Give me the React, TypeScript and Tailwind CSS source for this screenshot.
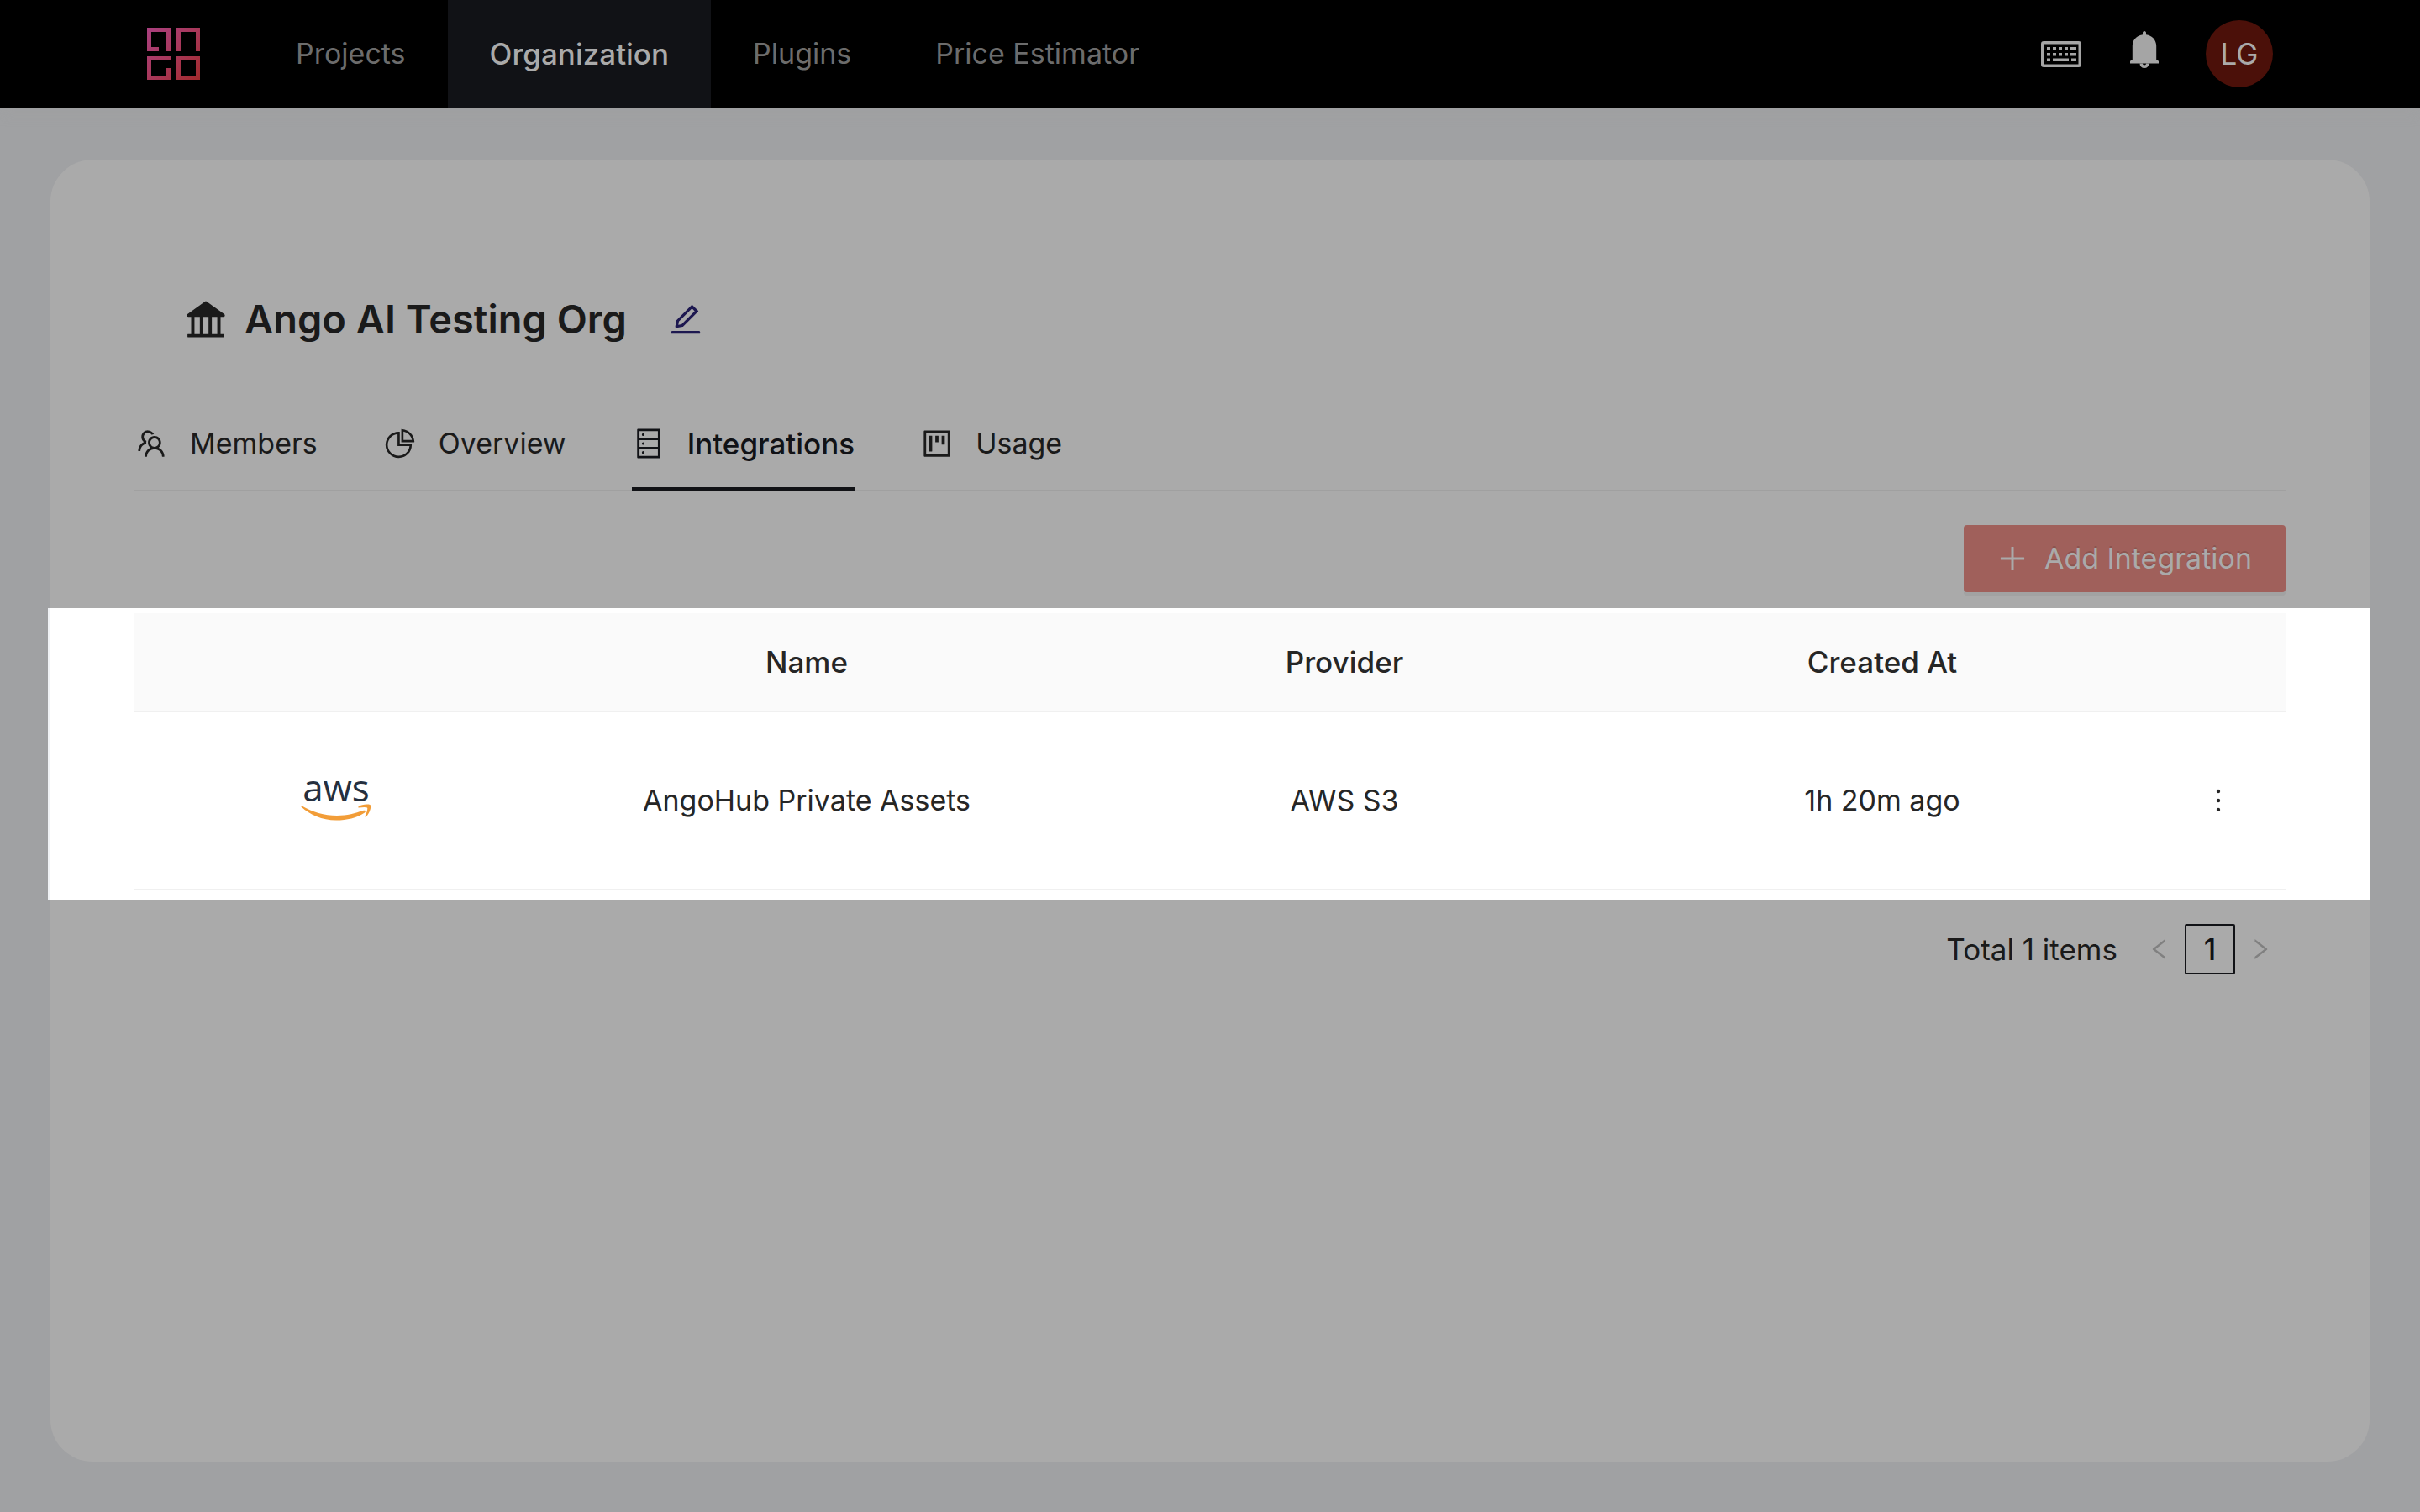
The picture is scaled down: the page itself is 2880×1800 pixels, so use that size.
import {
  AiFillBank, AiOutlineDatabase, AiOutlineEdit, AiOutlineLeft, AiOutlineMore,
  AiOutlinePieChart, AiOutlinePlus, AiOutlineProject, AiOutlineRight, AiOutlineTeam,
} from "react-icons/ai";

const NAV = ["Projects", "Organization", "Plugins", "Price Estimator"];

const TABS = [
  { label: "Members", Icon: AiOutlineTeam },
  { label: "Overview", Icon: AiOutlinePieChart },
  { label: "Integrations", Icon: AiOutlineDatabase },
  { label: "Usage", Icon: AiOutlineProject },
];

function Logo() {
  return (
    <svg viewBox="0 0 63 62" className="h-[62px] w-[63px]" fill="none" role="img" aria-label="Ango">
      <defs>
        <linearGradient id="logo" x1="0" y1="0" x2="63" y2="62" gradientUnits="userSpaceOnUse">
          <stop offset="0" stopColor="#aa4080" />
          <stop offset="0.5" stopColor="#a8385a" />
          <stop offset="1" stopColor="#a22a2c" />
        </linearGradient>
      </defs>
      <g stroke="url(#logo)" strokeWidth="5">
        <path d="M14 25.500H2.500V2.500H25.500V28" />
        <path d="M37.500 28V2.500H60.500V28" />
        <path d="M28 36.500H2.500V59.500H25.500V48" />
        <path d="M37.500 36.500H60.500V59.500H37.500Z" />
      </g>
    </svg>
  );
}

function KeyboardIcon() {
  return (
    <svg viewBox="0 0 48 31" className="h-[31px] w-[48px]" fill="currentColor" aria-hidden="true">
      <rect x="1.750" y="1.750" width="44.500" height="27.500" rx="1.500" fill="none" stroke="currentColor" strokeWidth="3.500" />
      <path d="M7 7h4v3.500H7zM14 7h4v3.500h-4zM21 7h4v3.500h-4zM28 7h4v3.500h-4zM34.500 7H42v3.500h-7.500z" />
      <path d="M7 14h4v3.500H7zM14 14h4v3.500h-4zM21 14h4v3.500h-4zM28 14h4v3.500h-4zM34.500 14H42v3.500h-7.500z" />
      <path d="M7 20.500h4V24H7zM14 20.500h19V24H14zM36 20.500h6V24h-6z" />
    </svg>
  );
}

function BellIcon() {
  return (
    <svg viewBox="0 0 34 54" className="h-[54px] w-[34px]" fill="currentColor" aria-hidden="true">
      <path d="M17 0C18.300 0 19 1 19 2.200V4.200C26 5 31.200 10.500 31.200 17.500V35H32.500C33.500 35 34 35.600 34 36.500V38.600H0V36.500C0 35.600 0.500 35 1.500 35H2.800V17.500C2.800 10.500 8 5 15 4.200V2.200C15 1 15.700 0 17 0Z" />
      <path d="M13.200 38.500A3.800 3.800 0 0 0 20.800 38.500" fill="none" stroke="currentColor" strokeWidth="3.400" />
    </svg>
  );
}

function AwsLogo() {
  return (
    <div className="flex flex-col items-center pb-[12px]" role="img" aria-label="aws">
      <span className="font-['Open_Sans',sans-serif] text-[44px] leading-[40px] font-medium text-[#252f3e]">aws</span>
      <svg viewBox="0 0 84 20" className="h-[20px] w-[84px]" fill="#f29d38">
        <path d="M0.500 2C14 10 28 14 43 14C55 14 65 11 74 8C77 7 78 9 76 10.500C66 17 55 19.500 42 19.500C25 19.500 11 13 0.500 3.500C-0.300 2.500 0 1.600 0.500 2Z" />
        <path d="M68.500 3.500C72 0.500 79 0 82.500 1C84.500 3 82 11 78 15C77 16 76 15.500 76.500 14.500C78 11 80 6 79 4.500C77 3.500 73 4 69 4.500C68 4.500 67.800 4 68.500 3.500Z" />
      </svg>
    </div>
  );
}

export default function App() {
  return (
    <div className="flex min-h-screen flex-col bg-[#a0a1a3] font-[Inter,sans-serif] text-[34px] leading-[56px] text-[#1a1a1a]">
      <header className="flex h-[128px] items-center bg-black px-[175px] shadow-[0_4px_16px_rgba(160,160,160,0.4)]">
        <Logo />
        <nav className="ml-[64px] flex h-full">
          {NAV.map((label) => (
            <a
              key={label}
              href="#"
              aria-current={label === "Organization" ? "page" : undefined}
              className={
                label === "Organization"
                  ? "flex items-center bg-[#111216] px-[50px] text-[35px] font-medium text-[#aaaaaa]"
                  : "flex items-center px-[50px] text-[#6c6c6c]"
              }
            >
              {label}
            </a>
          ))}
        </nav>
        <div className="ml-auto flex items-center text-[#a5a5a5]">
          <button aria-label="Keyboard shortcuts"><KeyboardIcon /></button>
          <button aria-label="Notifications" className="ml-[58px]"><BellIcon /></button>
          <button className="ml-[56px] size-[80px] rounded-full bg-[#4b1009] text-[35px] text-[#aaaaaa]">LG</button>
        </div>
      </header>

      <main className="mx-[60px] mt-[62px] mb-[60px] flex-1 rounded-[50px] bg-[#aaaaaa] px-[100px] pt-[154px]">
        <div className="flex items-center pl-[57px]">
          <AiFillBank className="size-[56px]" />
          <h1 className="ml-[18px] text-[47px] leading-[72px] font-semibold">Ango AI Testing Org</h1>
          <button aria-label="Edit organization name" className="ml-[48px] text-[#1d1850]"><AiOutlineEdit className="size-[44px]" /></button>
        </div>

        <div role="tablist" className="mt-[50px] flex h-[119px] gap-[78px] border-b-2 border-[#a0a0a0]">
          {TABS.map(({ label, Icon }) => (
            <button
              key={label}
              role="tab"
              aria-selected={label === "Integrations"}
              className={
                label === "Integrations"
                  ? "-mb-[2px] flex items-center gap-[26px] border-b-5 border-[#111216] pt-[10px] text-[35px] font-medium text-[#111216]"
                  : "-mb-[2px] flex items-center gap-[26px] border-b-5 border-transparent pt-[10px]"
              }
            >
              <Icon className="size-[40px]" />
              {label}
            </button>
          ))}
        </div>

        <div className="mt-[40px] flex justify-end">
          <button className="flex h-[80px] items-center gap-[18px] rounded-[4px] bg-[#a0605b] pr-[40px] pl-[38px] text-[#aaaaaa] shadow-[0_4px_0_#a2a2a2] [text-shadow:0_-2px_0_rgba(0,0,0,0.12)]">
            <AiOutlinePlus className="size-[40px]" />
            Add Integration
          </button>
        </div>

        <section className="-mr-[100px] -ml-[103px] mt-[19px] border-l-3 border-[#f0f2f5] bg-white px-[100px] pt-[6px] pb-[11px]">
          <table className="w-full table-fixed border-collapse text-center text-[#262626]">
            <thead>
              <tr className="h-[117px] border-b-2 border-[#f0f0f0] bg-[#fafafa] text-[35px]">
                <th className="w-3/16" aria-label="Logo" />
                <th className="w-1/4 font-medium">Name</th>
                <th className="w-1/4 font-medium">Provider</th>
                <th className="w-1/4 font-medium">Created At</th>
                <th className="w-1/16" aria-label="Actions" />
              </tr>
            </thead>
            <tbody>
              <tr className="h-[212px] border-b-2 border-[#f0f0f0]">
                <td><AwsLogo /></td>
                <td>AngoHub Private Assets</td>
                <td>AWS S3</td>
                <td>1h 20m ago</td>
                <td><button aria-label="More actions" className="mx-auto block"><AiOutlineMore className="size-[40px]" /></button></td>
              </tr>
            </tbody>
          </table>
        </section>

        <nav aria-label="Pagination" className="mt-[29px] flex items-center justify-end text-[35px]">
          <span>Total 1 items</span>
          <button aria-label="Previous page" disabled className="ml-[20px] flex size-[60px] items-center justify-center text-[#808080]"><AiOutlineLeft className="size-[32px]" /></button>
          <button aria-current="page" className="flex size-[60px] items-center justify-center rounded-[2px] border-2 border-[#111216] font-medium text-[#111216]">1</button>
          <button aria-label="Next page" disabled className="flex size-[60px] items-center justify-center text-[#808080]"><AiOutlineRight className="size-[32px]" /></button>
        </nav>
      </main>
    </div>
  );
}
